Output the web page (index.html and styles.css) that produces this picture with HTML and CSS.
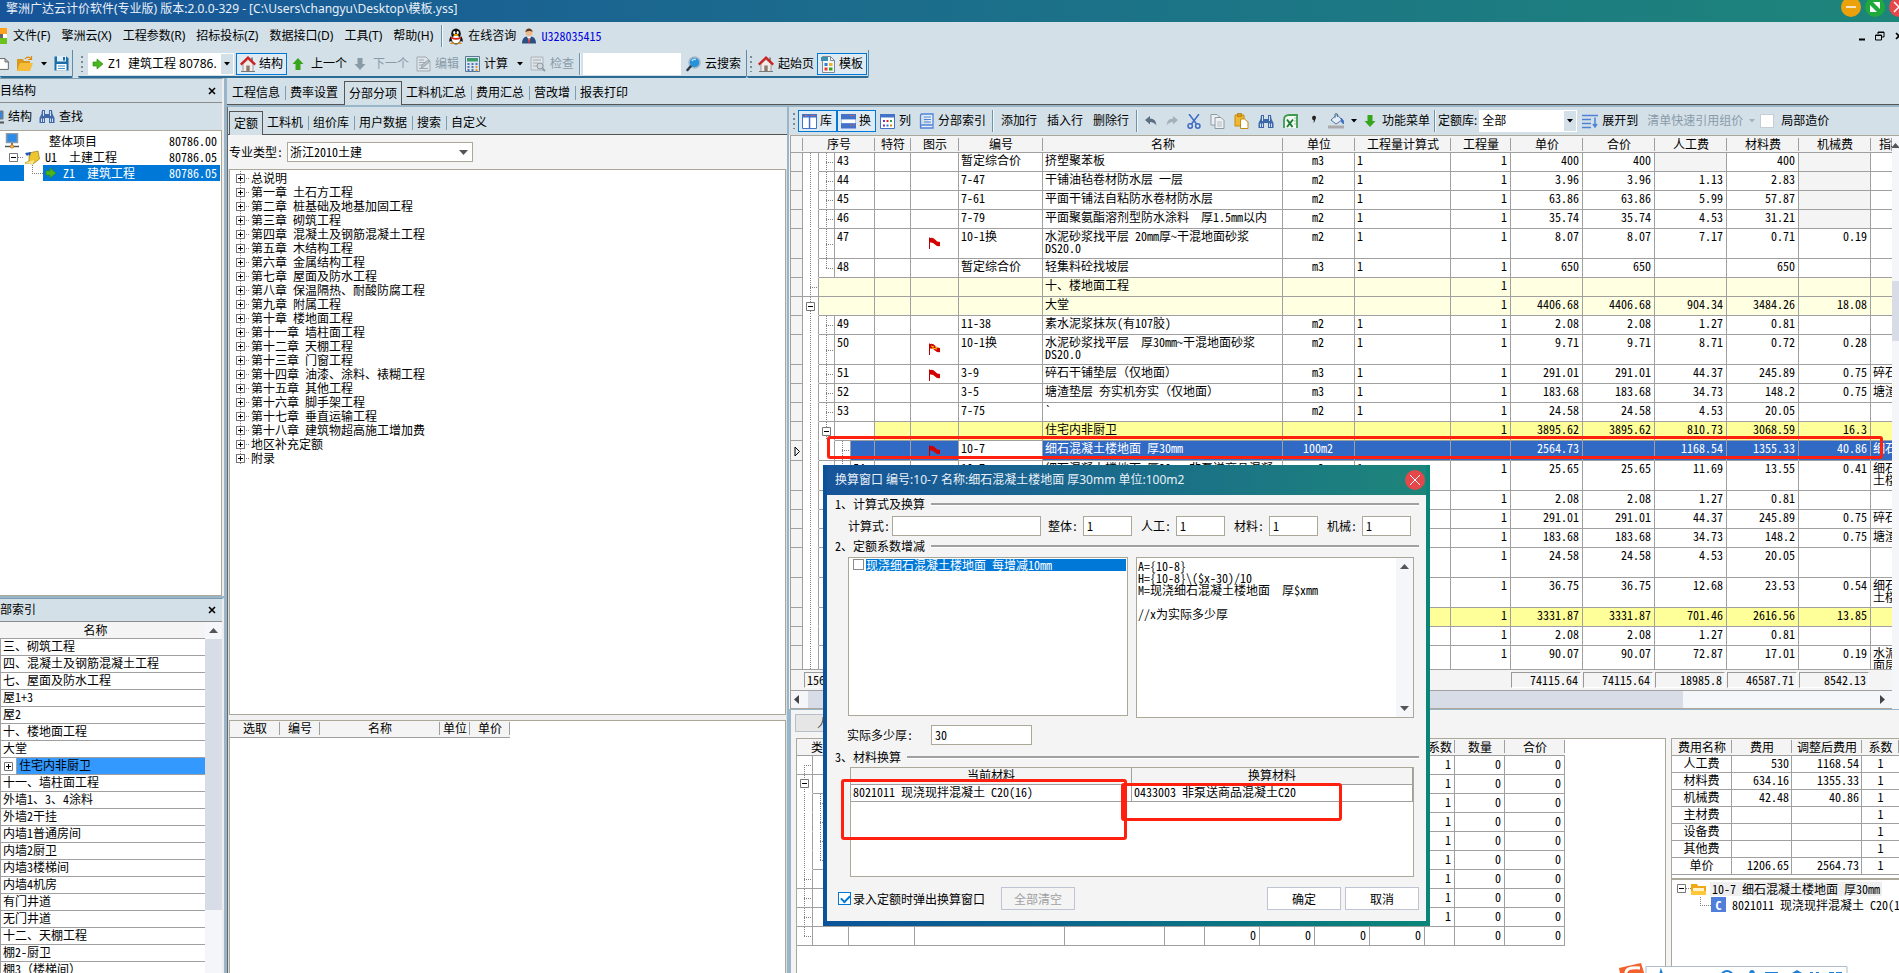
FILE: index.html
```html
<!DOCTYPE html>
<html lang="zh-CN">
<head>
<meta charset="utf-8">
<title>擎洲广达云计价软件</title>
<link rel="stylesheet" href="styles.css">
</head>
<body>
<svg class="defs" aria-hidden="true">
<symbol id="house" viewBox="0 0 16 16"><path d="M3 8v7.5h10V8L8 3.5z" fill="#f3ece6" stroke="#8a8a8a" stroke-width=".8"/><path d="M6.3 9.5h3.4v6H6.3z" fill="#8a7a70"/><path d="M12 1.5v4" stroke="#8a8a8a" stroke-width="2"/><path d="M.8 8.6 8 1.6l7.200 7" fill="none" stroke="#cf2020" stroke-width="2.200"/><path d="M1 15.500h14" stroke="#777"/></symbol>
<symbol id="right" viewBox="0 0 12 12"><path d="M1 4h4V1l6 5-6 5V8H1z" fill="#4cb51e" stroke="#2f8f14" stroke-width=".7"/></symbol>
<symbol id="up" viewBox="0 0 12 14"><path d="M6 1l5.500 6H8.500v6h-5V7H.5z" fill="#35a51b"/></symbol>
<symbol id="down" viewBox="0 0 12 14"><path d="M6 13l5.500-6H8.500V1h-5v6H.5z" fill="currentColor"/></symbol>
<symbol id="caret" viewBox="0 0 8 4"><path d="M1 0h6L4 3.500z" fill="currentColor"/></symbol>
<symbol id="folder" viewBox="0 0 18 16"><path d="M1 3h6l1 2h6v10H1z" fill="#d99a1c"/><path d="M4 7h13l-3 8H1z" fill="#f6bd3a"/><path d="M9 3c2-3 5-2 6 0M15.500 0v3.500H12" fill="none" stroke="#e08a10" stroke-width="1.200"/></symbol>
<symbol id="save" viewBox="0 0 15 15"><path d="M.5.5h12l2 2v12H.5z" fill="#1c6ea8"/><path d="M3 0h9v5.500H3z" fill="#dff0fa"/><path d="M9 1h2v3.500H9z" fill="#1c6ea8"/><path d="M2.500 8h10v6.500h-10z" fill="#fff"/><path d="M4 10h7M4 12.500h7" stroke="#3b93c9"/></symbol>
<symbol id="page" viewBox="0 0 12 16"><path d="M-4 1.500H6l4 4v9H-4zM6 1.500v4h4" fill="#fff" stroke="#666" stroke-width="1.200"/></symbol>
<symbol id="edit" viewBox="0 0 15 16"><path d="M1 1h9l4 4v10H1z" fill="#dde3e6" stroke="#9fabb3"/><path d="M3 4h5M3 6.500h7M3 9h4M3 12.500h9" stroke="#9fabb3"/><path d="M5 12l1-3 6-5 1.500 2-6 5z" fill="#b5bfc6" stroke="#8b98a1" stroke-width=".7"/></symbol>
<symbol id="calc" viewBox="0 0 15 16"><path d="M.5.500h14v15H.5z" fill="#dce5f0" stroke="#5a7796"/><path d="M2 2h11v3.500H2z" fill="#3c9d6a"/><path d="M2.500 8h2M6.500 8h2M10.500 8h2M2.500 11h2M6.500 11h2M2.500 14h2M6.500 14h2" stroke="#4c78b8" stroke-width="1.800"/><path d="M10.500 11h2M10.500 14h2" stroke="#e8a020" stroke-width="1.800"/></symbol>
<symbol id="check" viewBox="0 0 16 16"><path d="M1 1h12v13H1z" fill="#dde3e6" stroke="#aab4bb"/><path d="M3 4h8M3 7h5M3 10h4" stroke="#a4afb6"/><circle cx="10" cy="10" r="3" fill="#d0d8dd" stroke="#8b98a1"/><path d="M12.500 12.500 15 15" stroke="#8b98a1" stroke-width="1.800"/></symbol>
<symbol id="search" viewBox="0 0 15 16"><circle cx="8.500" cy="6.500" r="5.500" fill="#2293dc" stroke="#a9b7c2" stroke-width="1.500"/><path d="M6 5a3 3 0 0 1 4-1.500" stroke="#bfe3fa" stroke-width="1.500" fill="none"/><path d="M4.500 10.500 1.500 14" stroke="#2a3a48" stroke-width="2.500" stroke-linecap="round"/></symbol>
<symbol id="tmpl" viewBox="0 0 15 18"><path d="M1.500 1.500h8l4 4v12h-12z" fill="#f4f7f9" stroke="#7b8a95"/><path d="M9.500 1.500v4h4" fill="none" stroke="#7b8a95"/><path d="M0 2h7v4H0z" fill="#3c90b0"/><path d="M3.500 8h3v3h-3z" fill="#2f7fd0"/><path d="M8 8h3.500v3H8z" fill="#f0b030"/><path d="M3.500 12.500h3v3h-3z" fill="#e33"/><path d="M8 12.500h3.500v3H8z" fill="#35a51b"/></symbol>
<symbol id="qq" viewBox="0 0 16 17"><ellipse cx="8" cy="6" rx="4.800" ry="5.500" fill="#111"/><path d="M3 8c-2 3-2 5-1.500 6l2-1.500zM13 8c2 3 2 5 1.500 6l-2-1.500z" fill="#111"/><ellipse cx="8" cy="11.500" rx="4.500" ry="4.500" fill="#fff" stroke="#111"/><ellipse cx="6.300" cy="4.500" rx="1.100" ry="1.500" fill="#fff"/><ellipse cx="9.700" cy="4.500" rx="1.100" ry="1.500" fill="#fff"/><ellipse cx="8" cy="7" rx="2.600" ry="1" fill="#f5a800"/><path d="M3 8.500q5 3 10 0v2q-5 2.500-10 0z" fill="#d8201a"/><path d="M2.500 15.500q2-2 4.500 0zM9 15.500q2-2 4.500 0z" fill="#f5a800" stroke="#c77b00" stroke-width=".6"/></symbol>
<symbol id="man" viewBox="0 0 16 16"><circle cx="8" cy="4.500" r="3.500" fill="#f0b78a"/><path d="M4.300 4Q5 .5 8 .5T11.700 4Q9 2 4.300 4z" fill="#5b3a20"/><path d="M1 15.500q0-6 4.500-7L8 11l2.500-2.500q4.500 1 4.500 7z" fill="#2b4f80"/><path d="M6.500 9h3L8 15z" fill="#fff"/><path d="M7.500 10h1l.5 4-1 1.500L7 14z" fill="#c33"/></symbol>
<symbol id="bino" viewBox="0 0 16 15"><path d="M3 1h3v4h4V1h3l.5 4L15.500 9v5h-5.500V9H6v5H.5V9L2.500 5z" fill="#3f68a8"/><path d="M2.500 9.500v3.500M4.500 9.500v3.500M11.500 9.500v3.500M13.500 9.500v3.500M4.500 2v5M11.500 2v5" stroke="#e6eefa" stroke-width=".9"/></symbol>
<symbol id="pc" viewBox="0 0 14 16"><path d="M1.500.5h11v9h-11z" fill="#2c8be8" stroke="#8e9aa5" stroke-width="1.500"/><path d="M7 10v3M0 13.500h14" stroke="#555" stroke-width="1.500"/><circle cx="7" cy="13.500" r="1.700" fill="#ffb84a" stroke="#b06c00" stroke-width=".6"/></symbol>
<symbol id="proj" viewBox="0 0 16 15"><path d="M5 3 14 1l1.500 8L9 14 1 13l4-2z" fill="#edc62e" stroke="#9a7a10" stroke-width=".7"/><path d="M1 13q5 1 8 1l1-4z" fill="#fae98c"/><path d="M1 3l2 3 1.500-1.500L6 6l1-4-3 .5z" fill="#1f55b5"/></symbol>
<symbol id="win" viewBox="0 0 15 15"><path d="M.5.5h14v14H.5z" fill="#fff" stroke="#4373c9"/><path d="M0 0h15v3.500H0zM6.800 0h1.500v15H6.800z" fill="#4373c9"/><path d="M3 1.500h2M9 1.500h1.500M11.500 1.500H13" stroke="#ff5a4a"/></symbol>
<symbol id="rows" viewBox="0 0 15 15"><path d="M0 0h15v5H0zM0 9.500h15v5H0z" fill="#4373c9"/><path d="M0 5h15v4.500H0z" fill="#fff" stroke="#4373c9" stroke-width=".8"/><path d="M9 1.500h1.500M12 1.500h1.500M9 11h1.500M12 11h1.500" stroke="#ff5a4a"/></symbol>
<symbol id="cols" viewBox="0 0 15 15"><path d="M.5.500h14v14H.5z" fill="#fff" stroke="#4373c9"/><path d="M0 0h15v3.500H0z" fill="#4373c9"/><path d="M3 7h2M3 11.500h2" stroke="#7a2fc0" stroke-width="2"/><path d="M6.500 7h2" stroke="#d22" stroke-width="2"/><path d="M10 7h2" stroke="#2aa04a" stroke-width="2"/><path d="M6.500 11.500h2" stroke="#1a7ad0" stroke-width="2"/><path d="M10 11.500h2" stroke="#e08a10" stroke-width="2"/></symbol>
<symbol id="book" viewBox="0 0 15 16"><path d="M3 1h11v11H3q-2 1-1.500 3H14v-2M1.500 14V3Q1.500 1 3 1" fill="#e8f0fc" stroke="#4f82d6" stroke-width="1.300"/><path d="M5 4h7M5 6.500h7M5 9h7" stroke="#4f82d6"/></symbol>
<symbol id="undo" viewBox="0 0 12 11"><path d="M0 4 5 0v2.500q6 0 6.500 7Q9 6 5 6v2.500z" fill="currentColor"/></symbol>
<symbol id="redo" viewBox="0 0 12 11"><path d="M12 4 7 0v2.500q-6 0-6.500 7Q3 6 7 6v2.500z" fill="currentColor"/></symbol>
<symbol id="cut" viewBox="0 0 14 15"><path d="M2 0l7.500 10M12 0 4.500 10" stroke="#3f6bc4" stroke-width="1.500"/><circle cx="3.200" cy="12" r="2.200" fill="none" stroke="#3f6bc4" stroke-width="1.500"/><circle cx="10.800" cy="12" r="2.200" fill="none" stroke="#3f6bc4" stroke-width="1.500"/></symbol>
<symbol id="copy" viewBox="0 0 15 15"><path d="M1 .5h6l2.500 2.500v8H1z" fill="#eef1f4" stroke="#8f99a3"/><path d="M5 3.500h6l3 3v8H5z" fill="#eef1f4" stroke="#8f99a3"/><path d="M7 8h5M7 10h5M7 12h5" stroke="#a5afb8" stroke-width=".8"/></symbol>
<symbol id="paste" viewBox="0 0 15 16"><path d="M1 2h9v11H1z" fill="#f1b72f" stroke="#c58c10"/><path d="M3.500.5h4v3h-4z" fill="#d9a020" stroke="#a87408" stroke-width=".7"/><path d="M6.500 6h4l3.500 3v6.500H6.500z" fill="#fff" stroke="#c58c10"/></symbol>
<symbol id="excel" viewBox="0 0 15 15"><path d="M14 14V1H6Q1 1 1 6v8" fill="#f3faf3" stroke="#3f9a50" stroke-width="1.800"/><path d="M4 5.500 9.500 13M10 5.500 4 13" stroke="#1f7a35" stroke-width="2"/><path d="M11 4h2M11 7h2M11 10h2" stroke="#8cc79a"/></symbol>
<symbol id="bucket" viewBox="0 0 17 16"><path d="M3 7 9 1.500 14 7 8 11z" fill="#e4ecf8" stroke="#56749c"/><path d="M7 5V1q1.500-1.500 2.500 0v3" fill="none" stroke="#56749c"/><path d="M13 5q3.500 2 2.500 6-2.500-1-2.500-6z" fill="#3c78d8" stroke="#2b5bb0" stroke-width=".6"/><path d="M0 12.500h16v3H0z" fill="#aaa"/></symbol>
<symbol id="expand" viewBox="0 0 16 15"><path d="M0 1.500h16M0 5.500h9M0 9.500h9M0 13.500h9" stroke="#4f82d6" stroke-width="1.500"/><path d="M13 3.500v9M11 10l2 3 2-3" fill="none" stroke="#4f82d6" stroke-width="1.500"/></symbol>
<symbol id="flag" viewBox="0 0 11 12"><path d="M.5.500V12" stroke="#b00"/><path d="M1 1Q4 0 6 2.500T11 5v4Q8 10 6 7.500T1 5.500z" fill="#d20000"/></symbol>
<symbol id="plus" viewBox="0 0 9 9"><path d="M.5.5h8v8h-8z" fill="#fff" stroke="#777"/><path d="M2 4.500h5M4.500 2v5" stroke="#000"/></symbol>
<symbol id="minus" viewBox="0 0 9 9"><path d="M.5.5h8v8h-8z" fill="#fff" stroke="#777"/><path d="M2 4.500h5" stroke="#000"/></symbol>
<symbol id="x" viewBox="0 0 8 8"><path d="M1 1l6 6M7 1 1 7" stroke="currentColor" stroke-width="1.600"/></symbol>
<symbol id="tu" viewBox="0 0 9 5"><path d="M0 5h9L4.500 0z" fill="#555"/></symbol>
<symbol id="td" viewBox="0 0 9 5"><path d="M0 0h9L4.500 5z" fill="#555"/></symbol>
<symbol id="tl" viewBox="0 0 5 9"><path d="M5 0v9L0 4.500z" fill="#444"/></symbol>
<symbol id="tr" viewBox="0 0 5 9"><path d="M0 0v9l5-4.500z" fill="#444"/></symbol>
</svg>

<header class="titlebar"><span>擎洲广达云计价软件(专业版) 版本:2.0.0-329 - [C:\Users\changyu\Desktop\模板.yss]</span>
<div class="winbtns">
<button class="round orange" aria-label="最小化"><svg width="12" height="12"><path d="M1 6h10" stroke="#fff" stroke-width="1.500"/></svg></button>
<button class="round green" aria-label="还原"><svg width="12" height="12"><path d="M4 1h7v7zM1 4v7h7z" fill="#fff"/></svg></button>
<button class="round red" aria-label="关闭"><svg width="12" height="12"><path d="M1 1l10 10M11 1 1 11" stroke="#fff" stroke-width="1.500"/></svg></button>
</div></header>

<nav class="menu">
<svg class="app" width="7" height="16"><path d="M0 0h7v6H0z" fill="#ffa21f"/><path d="M0 10h7v6H0z" fill="#6cc11c"/><path d="M0 6h3v4H0z" fill="#666"/><path d="M3 6h4v4H3z" fill="#fff"/></svg>
<button>文件(F)</button><button>擎洲云(X)</button><button>工程参数(R)</button><button>招标投标(Z)</button><button>数据接口(D)</button><button>工具(T)</button><button>帮助(H)</button>
<i class="sep"></i>
<button class="ico"><svg width="16" height="17"><use href="#qq"/></svg>在线咨询</button>
<button class="ico user"><svg width="16" height="16"><use href="#man"/></svg><span class="mono">U328035415</span></button>
<div class="mdi"><svg width="6" height="10"><path d="M0 8.500h6" stroke="#000" stroke-width="2"/></svg><svg width="10" height="10"><path d="M3 3V1h6v5H7M.5 4h6v5h-6zM0 4.500h7M3 1.500h6" fill="none" stroke="#000"/></svg><svg width="8" height="8"><use href="#x"/></svg></div>
</nav>

<div class="toolbar">
<div class="band first">
<svg width="10" height="16"><use href="#page"/></svg><svg width="18" height="16"><use href="#folder"/></svg><svg width="8" height="4"><use href="#caret"/></svg><svg width="15" height="15"><use href="#save"/></svg>
</div>
<div class="band grow">
<i class="grip"></i>
<div class="combo node"><svg width="12" height="12"><use href="#right"/></svg><select aria-label="节点"><option>Z1&nbsp; 建筑工程 80786.</option></select><span class="drop"><svg width="8" height="4"><use href="#caret"/></svg></span></div>
<button class="ico on"><svg width="16" height="16"><use href="#house"/></svg>结构</button>
<button class="ico step"><svg width="12" height="14"><use href="#up"/></svg>上一个</button>
<button class="ico step off"><svg width="12" height="14"><use href="#down"/></svg>下一个</button>
<button class="ico off"><svg width="15" height="16"><use href="#edit"/></svg>编辑</button>
<button class="ico"><svg width="15" height="16"><use href="#calc"/></svg>计算<svg class="cr" width="8" height="4"><use href="#caret"/></svg></button>
<button class="ico off"><svg width="16" height="16"><use href="#check"/></svg>检查</button>
<i class="sep"></i>
<input class="search" aria-label="搜索">
<button class="ico"><svg width="15" height="16"><use href="#search"/></svg>云搜索</button>
</div>
<div class="band last">
<i class="grip"></i>
<button class="ico home"><svg width="16" height="16"><use href="#house"/></svg>起始页</button>
<button class="ico on"><svg width="15" height="18"><use href="#tmpl"/></svg>模板</button>
</div>
</div>

<main class="work">
<aside class="left">
<section class="pane">
<div class="phead"><span>目结构</span><button aria-label="关闭"><svg width="8" height="8"><use href="#x"/></svg></button></div>
<div class="ptools"><svg width="4" height="14"><path d="M0 1h3v8H0z" fill="#2c8be8" stroke="#777"/><path d="M0 12.500h4" stroke="#555" stroke-width="2"/></svg><button>结构</button><svg width="16" height="15"><use href="#bino"/></svg><button>查找</button></div>
<div class="ptree mono">
<div class="pr p0"><svg width="14" height="16"><use href="#pc"/></svg><span>整体项目</span><b>80786.00</b></div>
<div class="pr p1"><svg width="9" height="9"><use href="#minus"/></svg><i></i><svg width="16" height="15"><use href="#proj"/></svg><span>U1&nbsp; 土建工程</span><b>80786.05</b></div>
<div class="pr p2"><i></i><svg width="12" height="12"><use href="#right"/></svg><span>Z1&nbsp; 建筑工程</span><b>80786.05</b></div>
</div>
</section>
<section class="pane idx">
<div class="phead"><span>部索引</span><button aria-label="关闭"><svg width="8" height="8"><use href="#x"/></svg></button></div>
<div class="scrollwrap">
<table class="idxt mono"><thead><tr><th>名称<tbody>
<tr><td>三、砌筑工程<tr><td>四、混凝土及钢筋混凝土工程<tr><td>七、屋面及防水工程<tr><td>屋1+3<tr><td>屋2<tr><td>十、楼地面工程<tr><td>大堂
<tr><td class="cur"><svg width="9" height="9"><use href="#plus"/></svg><span>住宅内非厨卫</span>
<tr><td>十一、墙柱面工程<tr><td>外墙1、3、4涂料<tr><td>外墙2干挂<tr><td>内墙1普通房间<tr><td>内墙2厨卫<tr><td>内墙3楼梯间<tr><td>内墙4机房<tr><td>有门井道<tr><td>无门井道<tr><td>十二、天棚工程<tr><td>棚2-厨卫<tr><td>棚3（楼梯间）
</table>
<div class="vbar"><svg width="9" height="5"><use href="#tu"/></svg><i></i></div>
</div>
</section>
</aside>

<div class="right">
<div class="tabs main"><button>工程信息</button><button class="nos">费率设置</button><button class="act">分部分项</button><button>工料机汇总</button><button>费用汇总</button><button>营改增</button><button class="nos">报表打印</button></div>
<div class="cols">
<section class="lib">
<div class="tabs sub"><button class="act">定额</button><button>工料机</button><button>组价库</button><button>用户数据</button><button>搜索</button><button class="nos">自定义</button></div>
<div class="filter mono"><label for="kind">专业类型:</label><div class="kind"><select id="kind"><option>浙江2010土建</option></select><svg width="9" height="5"><use href="#td"/></svg></div></div>
<ul class="chap mono">
<li>总说明<li>第一章 土石方工程<li>第二章 桩基础及地基加固工程<li>第三章 砌筑工程<li>第四章 混凝土及钢筋混凝土工程<li>第五章 木结构工程<li>第六章 金属结构工程<li>第七章 屋面及防水工程<li>第八章 保温隔热、耐酸防腐工程<li>第九章 附属工程<li>第十章 楼地面工程<li>第十一章 墙柱面工程<li>第十二章 天棚工程<li>第十三章 门窗工程<li>第十四章 油漆、涂料、裱糊工程<li>第十五章 其他工程<li>第十六章 脚手架工程<li>第十七章 垂直运输工程<li>第十八章 建筑物超高施工增加费<li>地区补充定额<li>附录
</ul>
<div class="pick mono"><table><colgroup><col class="c50"><col class="c40"><col class="c120"><col class="c30"><col class="c40"></colgroup><tr><th>选取<th>编号<th>名称<th>单位<th>单价</table></div>
</section>

<section class="detail">
<div class="gtools">
<i class="grip"></i>
<button class="ico on"><svg width="15" height="15"><use href="#win"/></svg>库</button><button class="ico on"><svg width="15" height="15"><use href="#rows"/></svg>换</button><button class="ico pad"><svg width="15" height="15"><use href="#cols"/></svg>列</button><button class="ico pad"><svg width="15" height="16"><use href="#book"/></svg>分部索引</button>
<i class="sep"></i><button>添加行</button><button>插入行</button><button>删除行</button><i class="sep"></i>
<div class="icons"><svg class="dk" width="12" height="11"><use href="#undo"/></svg><svg class="lt" width="12" height="11"><use href="#redo"/></svg><svg width="14" height="15"><use href="#cut"/></svg><svg width="15" height="15"><use href="#copy"/></svg><svg width="15" height="16"><use href="#paste"/></svg><svg width="16" height="15"><use href="#bino"/></svg><svg width="15" height="15"><use href="#excel"/></svg><svg width="12" height="12"><path d="M5 2.500a2 2 0 1 1 3.500 1.500Q8 7 6 8q1.200-1.800 1-2.500Q5.200 5.300 5 2.500z" fill="#222"/></svg><svg width="17" height="16"><use href="#bucket"/></svg></div>
<svg width="8" height="4"><use href="#caret"/></svg>
<button class="ico menu2"><svg class="gr" width="12" height="14"><use href="#down"/></svg>功能菜单</button><i class="sep"></i>
<label for="lib">定额库:</label><div class="combo"><select id="lib"><option>全部</option></select><span class="drop"><svg width="8" height="4"><use href="#caret"/></svg></span></div>
<button class="ico exp"><svg width="16" height="15"><use href="#expand"/></svg>展开到</button><button class="off">清单快速引用组价</button><svg class="lt" width="8" height="4"><use href="#caret"/></svg><input type="checkbox" id="part"><label class="pl" for="part">局部造价</label>
</div>
<div class="gridarea">
<div class="gridmain">
<div class="gridclip">
<table class="grid mono"><colgroup><col class="c12"><col class="c16"><col class="c16"><col class="c16"><col class="c24"><col class="c36"><col class="c48"><col class="c84"><col class="c240"><col class="c72"><col class="c96"><col class="c60"><col class="c72"><col class="c72"><col class="c72"><col class="c72"><col class="c72"><col></colgroup>
<thead><tr><th><th colspan="4">序号<th>特符<th>图示<th>编号<th>名称<th>单位<th>工程量计算式<th>工程量<th>单价<th>合价<th>人工费<th>材料费<th>机械费<th class="clip">指标
<tbody>
<tr><td><td class="v"><td class="br"><td colspan="2">43<td><td><td>暂定综合价<td>挤塑聚苯板<td>m3<td>1<td>1<td>400<td>400<td class="g"><td>400<td class="g"><td>
<tr><td><td class="v"><td class="br"><td colspan="2">44<td><td><td>7-47<td>干铺油毡卷材防水层 一层<td>m2<td>1<td>1<td>3.96<td>3.96<td>1.13<td>2.83<td class="g"><td>
<tr><td><td class="v"><td class="br"><td colspan="2">45<td><td><td>7-61<td>平面干铺法自粘防水卷材防水层<td>m2<td>1<td>1<td>63.86<td>63.86<td>5.99<td>57.87<td class="g"><td>
<tr><td><td class="v"><td class="br"><td colspan="2">46<td><td><td>7-79<td>平面聚氨酯溶剂型防水涂料&nbsp; 厚1.5mm以内<td>m2<td>1<td>1<td>35.74<td>35.74<td>4.53<td>31.21<td class="g"><td>
<tr class="two"><td><td class="v"><td class="br"><td colspan="2">47<td><td><svg width="11" height="12"><use href="#flag"/></svg><td>10-1换<td>水泥砂浆找平层 20mm厚~干混地面砂浆<br>DS20.0<td>m2<td>1<td>1<td>8.07<td>8.07<td>7.17<td>0.71<td>0.19<td>
<tr><td><td class="v"><td class="br end"><td colspan="2">48<td><td><td>暂定综合价<td>轻集料砼找坡层<td>m3<td>1<td>1<td>650<td>650<td><td>650<td><td>
<tr class="y1"><td><td class="br"><td colspan="3"><td><td><td><td>十、楼地面工程<td><td><td>1<td><td><td><td><td><td>
<tr class="y1"><td><td class="v nd"><svg width="9" height="9"><use href="#minus"/></svg><td colspan="3"><td><td><td><td>大堂<td><td><td>1<td>4406.68<td>4406.68<td>904.34<td>3484.26<td>18.08<td>
<tr><td><td class="v"><td class="br"><td colspan="2">49<td><td><td>11-38<td>素水泥浆抹灰(有107胶)<td>m2<td>1<td>1<td>2.08<td>2.08<td>1.27<td>0.81<td><td>
<tr class="two"><td><td class="v"><td class="br"><td colspan="2">50<td><td><svg width="11" height="12"><use href="#flag"/><path d="M2 3l3 1M6 3.500 8 5M3 5l5 1" stroke="#ffd400"/></svg><td>10-1换<td>水泥砂浆找平层&nbsp; 厚30mm~干混地面砂浆<br>DS20.0<td>m2<td>1<td>1<td>9.71<td>9.71<td>8.71<td>0.72<td>0.28<td>
<tr><td><td class="v"><td class="br"><td colspan="2">51<td><td><svg width="11" height="12"><use href="#flag"/></svg><td>3-9<td>碎石干铺垫层（仅地面）<td>m3<td>1<td>1<td>291.01<td>291.01<td>44.37<td>245.89<td>0.75<td>碎石
<tr><td><td class="v"><td class="br"><td colspan="2">52<td><td><td>3-5<td>塘渣垫层 夯实机夯实（仅地面）<td>m3<td>1<td>1<td>183.68<td>183.68<td>34.73<td>148.2<td>0.75<td>塘渣
<tr><td><td class="v"><td class="br"><td colspan="2">53<td><td><td>7-75<td>`<td>m2<td>1<td>1<td>24.58<td>24.58<td>4.53<td>20.05<td><td>
<tr class="y2"><td><td class="v"><td class="v nd"><svg width="9" height="9"><use href="#minus"/></svg><td colspan="2" class="w"><td><td><td><td>住宅内非厨卫<td><td><td>1<td>3895.62<td>3895.62<td>810.73<td>3068.59<td>16.3<td>
<tr class="cur"><td><svg width="6" height="11"><path d="M1 1v9l4.500-4.500z" fill="none" stroke="#000"/></svg><td class="v"><td class="e"><td class="br"><td><td><td><svg width="11" height="12"><use href="#flag"/></svg><td class="w">10-7<td>细石混凝土楼地面 厚30mm<td>100m2<td><td><td>2564.73<td><td>1168.54<td>1355.33<td>40.86<td>细石
<tr class="two"><td><td class="v"><td class="e"><td class="br"><td>54<td><td><td>10-7<td>细石混凝土楼地面~厚30mm~非泵送商品混凝<td>m2<td>1<td>1<td>25.65<td>25.65<td>11.69<td>13.55<td>0.41<td>细石<br>土楼
<tr><td><td class="v"><td class="e"><td class="br"><td><td><td><td><td><td><td><td>1<td>2.08<td>2.08<td>1.27<td>0.81<td><td>
<tr><td><td class="v"><td class="e"><td class="br"><td><td><td><td><td><td><td><td>1<td>291.01<td>291.01<td>44.37<td>245.89<td>0.75<td>碎石
<tr><td><td class="v"><td class="e"><td class="br"><td><td><td><td><td><td><td><td>1<td>183.68<td>183.68<td>34.73<td>148.2<td>0.75<td>塘渣
<tr class="two"><td><td class="v"><td class="e"><td class="br"><td><td><td><td><td><td><td><td>1<td>24.58<td>24.58<td>4.53<td>20.05<td><td>
<tr class="two"><td><td class="v"><td class="e"><td class="br"><td><td><td><td><td><td><td><td>1<td>36.75<td>36.75<td>12.68<td>23.53<td>0.54<td>细石<br>土楼
<tr class="y2"><td><td class="v"><td class="v"><td colspan="2" class="w"><td><td><td><td><td><td><td>1<td>3331.87<td>3331.87<td>701.46<td>2616.56<td>13.85<td>
<tr><td><td class="v"><td class="e"><td class="br"><td><td><td><td><td><td><td><td>1<td>2.08<td>2.08<td>1.27<td>0.81<td><td>
<tr class="two"><td><td class="v"><td class="e"><td class="br"><td><td><td><td><td><td><td><td>1<td>90.07<td>90.07<td>72.87<td>17.01<td>0.19<td>水泥<br>面层
</table>
</div>
<div class="sums mono"><span class="cnt">156</span><span>74115.64</span><span>74115.64</span><span>18985.8</span><span>46587.71</span><span>8542.13</span></div>
<div class="hbar"><svg width="5" height="9"><use href="#tl"/></svg><i></i><svg width="5" height="9"><use href="#tr"/></svg></div>
</div>
<div class="vbar slim"><svg width="9" height="5"><use href="#tu"/></svg><i></i></div>
</div>
<div class="lower">
<div class="ltabs mono"><button>人材机</button></div>
<div class="lcols mono">
<div class="box res">
<table class="rt"><colgroup><col class="c16"><col class="c36"><col class="c66"><col class="c150"><col class="c100"><col class="c40"><col class="c55"><col class="c55"><col class="c55"><col class="c55"><col class="c30"><col class="c50"><col class="c60"></colgroup>
<thead><tr><th colspan="2">类别<th><th><th><th><th><th><th><th><th>系数<th>数量<th>合价
<tbody>
<tr><td class="br top"><td><td><td><td><td><td><td><td><td><td>1<td>0<td>0
<tr><td class="v nd"><svg width="9" height="9"><use href="#minus"/></svg><td><td><td><td><td><td><td><td><td><td>1<td>0<td>0
<tr><td class="v"><td class="br e"><td><td><td><td><td><td><td><td><td>1<td>0<td>0
<tr><td class="v"><td class="br e"><td><td><td><td><td><td><td><td><td>1<td>0<td>0
<tr><td class="v"><td class="br e"><td><td><td><td><td><td><td><td><td>1<td>0<td>0
<tr><td class="v"><td class="br end"><td><td><td><td><td><td><td><td><td>1<td>0<td>0
<tr><td class="br"><td><td><td><td><td><td><td><td><td><td>1<td>0<td>0
<tr><td class="br"><td><td><td><td><td><td><td><td><td><td>1<td>0<td>0
<tr><td class="br"><td><td><td><td><td><td><td><td><td><td>1<td>0<td>0
<tr><td class="br end"><td><td><td><td><td><td>0<td>0<td>0<td>0<td><td>0<td>0
</table></div>
<div class="box fee">
<table class="ft"><colgroup><col class="c60"><col class="c60"><col class="c70"><col></colgroup>
<thead><tr><th>费用名称<th>费用<th>调整后费用<th>系数
<tbody><tr><td>人工费<td>530<td>1168.54<td>1<tr><td>材料费<td>634.16<td>1355.33<td>1<tr><td>机械费<td>42.48<td>40.86<td>1<tr><td>主材费<td><td><td>1<tr><td>设备费<td><td><td>1<tr><td>其他费<td><td><td>1<tr><td>单价<td>1206.65<td>2564.73<td>1
</table>
<div class="ftree">
<div><svg width="9" height="9"><use href="#minus"/></svg><i></i><svg width="15" height="12"><path d="M0 1h6l1 2h8v9H0z" fill="#f0a818"/><path d="M2 5h11v3H2z" fill="#fff3c8"/><path d="M0 8h15v4H0z" fill="#ffc83a"/></svg><span class="hl">10-7 细石混凝土楼地面 厚30mm</span></div>
<div class="n2"><i></i><b>C</b><span>8021011 现浇现拌混凝土 C20(16)</span></div>
</div>
</div>
</div>
</div>
</section>
</div>
</div>
</main>

<div class="mark mrow"></div>

<div class="dialog" role="dialog" aria-labelledby="dt">
<div class="dhead"><span id="dt">换算窗口 编号:10-7 名称:细石混凝土楼地面 厚30mm 单位:100m2</span><button class="round red" aria-label="关闭"><svg width="12" height="12"><path d="M1 1l10 10M11 1 1 11" stroke="#fff"/></svg></button></div>
<div class="dbody mono">
<h2>1、计算式及换算</h2>
<div class="frow"><label for="f0">计算式:</label><input id="f0" class="wide"><label for="f1">整体:</label><input id="f1" value="1"><label for="f2">人工:</label><input id="f2" value="1"><label for="f3">材料:</label><input id="f3" value="1"><label for="f4">机械:</label><input id="f4" value="1"></div>
<h2>2、定额系数增减</h2>
<div class="two-box">
<div class="list"><div class="item"><input type="checkbox" id="it"><label for="it">现浇细石混凝土楼地面 每增减10mm</label></div></div>
<div class="memo"><textarea aria-label="公式">A={10-8}
H={10-8}\($x-30)/10
M=现浇细石混凝土楼地面  厚$xmm

//x为实际多少厚</textarea><div class="mbar"><svg width="9" height="5"><use href="#tu"/></svg><svg width="9" height="5"><use href="#td"/></svg></div></div>
</div>
<div class="frow act"><label for="th">实际多少厚:</label><input id="th" value="30"></div>
<h2>3、材料换算</h2>
<div class="mat"><table><thead><tr><th>当前材料<th>换算材料<tbody><tr><td>8021011 现浇现拌混凝土 C20(16)<td>0433003 非泵送商品混凝土C20</table></div>
<div class="dfoot"><input type="checkbox" id="pop" checked><label for="pop">录入定额时弹出换算窗口</label><button disabled>全部清空</button><span></span><button>确定</button><button>取消</button></div>
</div>
<div class="mark m1"></div><div class="mark m2"></div>
</div>

<div class="ime"><svg width="230" height="10"><path d="M27 3.500h201V16H27z" fill="#fff" stroke="#b0bccb"/><path d="M0 5 22 0l5 16H2z" fill="#f4602c"/><path d="M21 5Q8 4 7 9t14 7" fill="none" stroke="#fff" stroke-width="3"/><path d="M40 16l2-8 3 8M66 16v-6" fill="none" stroke="#1e7fd6" stroke-width="2"/><circle cx="108" cy="14" r="6" fill="none" stroke="#1e7fd6" stroke-width="2"/><path d="M130 12q0-5 3-5t3 5v4h-6zM146 9h13v2h-13zM173 10l5-3 5 3v6h-10zM191 9h3v2h-3zM197 9h3v2h-3zM210 9h5v7h-5zM217 9h6v7h-6z" fill="#1e7fd6"/></svg></div>
</body>
</html>
```

FILE: styles.css
```css
:root{
--ui:"Noto Sans","Noto Sans CJK SC",sans-serif;
--mono:"Noto Sans Mono CJK SC","Liberation Sans","Noto Sans CJK SC",sans-serif;
--bg:#d3e0e8;--panel:#f4f4f4;--line:#a0a0a0;--edge:#aca899;--rim:#9bb5c8;--blue:#0078d7;
--dv:repeating-linear-gradient(to bottom,#808080 0 1px,transparent 1px 2px);
--dh:repeating-linear-gradient(to right,#808080 0 1px,transparent 1px 2px);
}
*{box-sizing:border-box}
html,body{height:100%;overflow:hidden}
body{margin:0;display:flex;flex-direction:column;position:relative;background:var(--bg);font:12px/16px var(--ui);color:#000}
button,input,select,textarea{font:inherit;color:inherit;margin:0;border-radius:0}
button{background:none;border:0;padding:0;white-space:nowrap}
select{appearance:none;border:0;background:none;padding:0;min-width:0}
svg{display:block;flex:none}
.defs{position:absolute;width:0;height:0}
.mono{font-family:var(--mono)}
table{border-collapse:separate;border-spacing:0;table-layout:fixed}
th{font-weight:normal}

.titlebar{flex:none;height:22px;display:flex;justify-content:space-between;padding-left:6px;color:#e8f0f8;line-height:18px;background:linear-gradient(90deg,#17549a,#1b6a8e 40%,#1d857a)}
.winbtns{display:flex;gap:4px;margin-right:-10px;margin-top:-3px}
.round{width:20px;height:20px;border-radius:50%;display:grid;place-items:center}
.orange{background:#eaa10c}.green{background:#1fa93c}.red{background:#e5484a}

.menu{flex:none;height:28px;display:flex;align-items:center;gap:1px}
.menu button{padding:0 5px}
.menu .ico{padding:0 2px}
.sep{flex:none;width:2px;height:22px;border-left:1px solid #6c93ad;border-right:1px solid #f2f7fa;margin:0 2px}
.ico{display:flex;align-items:center;gap:4px}
.user{color:#0000e0}
.mdi{margin-left:auto;display:flex;align-items:center;gap:10px;margin-right:-4px}

.toolbar{flex:none;height:28px;display:flex}
.band{display:flex;align-items:center;height:28px;border-right:1px solid #5d8cab;border-bottom:2px solid #2b6a94;border-radius:0 0 2px 2px;padding:1px 2px 0 3px}
.first{padding:1px 5px 0 0;width:73px;gap:6px}
.grow{margin-left:5px}
.last{padding-right:1px}
.grip{flex:none;width:2px;height:16px;background:repeating-linear-gradient(to bottom,#7d8a94 0 2px,transparent 2px 5px);margin:0 3px 0 0}
.toolbar .ico{height:22px;padding:0 3px}
.toolbar .on{gap:3px}
.on{border:1px solid var(--blue);background:#dfeaf3}
.toolbar .step{width:62px;gap:7px}
.off{color:#8a9ba8}
.cr{margin:0 0 0 4px}
.combo{display:flex;align-items:center;height:22px;background:#fff;border:1px solid #fff}
.node{width:146px;padding-left:3px;gap:4px;margin:0 2px}
.node+.on{margin-right:2px}
.combo select{flex:1}
.drop{flex:none;width:12px;height:20px;background:var(--bg);display:grid;place-items:center}
.search{width:98px;height:22px;border:0;background:#fff;margin-right:2px}

.work{flex:1;min-height:0;display:grid;grid-template-columns:227px minmax(0,1fr);grid-template-rows:minmax(0,1fr)}
.left{display:grid;grid-template-rows:minmax(0,518fr) minmax(0,375fr);gap:2px;border-right:3px solid var(--rim);background:var(--rim);min-height:0}
.pane{background:var(--bg);border-right:2px solid #eee;border-top:1px solid #7d9db2;display:flex;flex-direction:column;min-height:0;overflow:hidden}
.phead{flex:none;height:24px;display:flex;justify-content:space-between;align-items:center;border-bottom:1px solid #8c8c8c;padding-right:6px}
.idx .phead{height:23px}
.ptools{flex:none;height:27px;display:flex;align-items:center;gap:4px}
.ptools button{margin-right:3px}
.ptree{flex:1;background:#fff;border:1px solid var(--edge);border-left:0;padding:2px 1px 0 0}
.pr{display:flex;align-items:center;height:16px;line-height:14px;white-space:nowrap}
.pr b{font-weight:normal;margin-left:auto;padding-right:3px}
.pr i{flex:none}
.p0{padding-left:5px}.p0 span{margin-left:30px}
.p1{padding-left:9px}.p1 i{width:6px;height:1px;background:var(--dh)}.p1 span{margin-left:5px}
.p2{color:#fff;background:linear-gradient(90deg,var(--blue) 24px,#fff 24px 43px,var(--blue) 43px)}
.p2 i{width:12px;height:16px;margin-left:32px;background:var(--dv) 0 0/1px 9px no-repeat,var(--dh) 0 8px/11px 1px no-repeat}
.p2 svg{margin:0 6px 0 1px}
.scrollwrap{flex:1;min-height:0;display:flex;background:#fff;overflow:hidden}
.idxt{flex:1;height:max-content;line-height:14px}
.idxt th{height:17px;background:var(--panel);border-bottom:1px solid var(--line);padding:0 14px 0 0}
.idxt td{height:17px;line-height:12px;padding:0 0 2px 2px;border-bottom:1px solid var(--line);border-left:1px solid var(--line);white-space:nowrap}
.idxt .cur{padding:0 0 2px 3px}
.cur svg{display:inline-block;vertical-align:middle}
.idxt .cur{background:linear-gradient(90deg,#fff 15px,var(--line) 15px 16px,#39f 16px)}
.idxt .cur span{margin-left:6px}
.vbar{width:17px;background:#f5f6fa;display:flex;flex-direction:column;align-items:center}
.vbar svg{margin:6px 0}
.vbar i{width:17px;height:271px;background:#d8dce6}

.right{min-width:0;min-height:0;display:flex;flex-direction:column}
.tabs{display:flex;align-items:flex-end;flex:none;border-bottom:1px solid #555}
.tabs button{height:22px;padding:0 5px 0 4px;border-right:1px solid;border-image:linear-gradient(transparent 20%,#7c9db2 20% 80%,transparent 80%) 1}
.tabs .nos{border-image:none;border-right-color:transparent}
.tabs .act{height:24px;margin-bottom:-1px;padding:0 4px;border:1px solid #555;border-bottom:0;border-image:none;background:var(--bg)}
.main{height:27px;padding-left:1px}
.sub{height:28px;padding-left:1px}
.cols{flex:1;min-height:0;display:grid;grid-template-columns:562px minmax(0,1fr);grid-template-rows:minmax(0,1fr);border-top:2px solid var(--rim)}
.lib{display:flex;flex-direction:column;min-height:0;border-left:1px solid #666;border-right:2px solid var(--rim);background:var(--bg)}
.filter{flex:none;height:34px;display:flex;align-items:center;gap:4px;background:var(--panel);padding-left:1px}
.kind{display:flex;align-items:center;width:186px;height:20px;background:#fff;border:1px solid var(--edge);padding:0 4px 0 2px}
.kind select{flex:1}
.chap{flex:545 1 0;min-height:0;overflow:hidden;margin:0 1px 0 1px;list-style:none;background:#fff;border:1px solid var(--edge);padding:1px 0 0 5px}
.chap li{height:14px;line-height:14px;padding-left:16px;background:
linear-gradient(#000,#000) 3px 7px/5px 1px no-repeat,
linear-gradient(#000,#000) 5px 5px/1px 5px no-repeat,
linear-gradient(#fff,#fff) 2px 4px/7px 7px no-repeat,
linear-gradient(#777,#777) 1px 3px/9px 9px no-repeat,
var(--dh) 11px 7px/4px 1px no-repeat,
var(--dv) 5px 0/1px 100% no-repeat}
.pick{flex:253 1 0;background:#fff;margin:5px 1px 0 1px;border:1px solid var(--edge);border-bottom:0;box-shadow:0 -5px 0 #f0f0f0}
.pick table{width:280px}
.pick th{height:17px;line-height:14px;padding:0 0 1px;background:linear-gradient(var(--line),var(--line)) right/1px 13px no-repeat var(--panel);border-bottom:1px solid var(--line)}

.detail{display:flex;flex-direction:column;min-height:0;min-width:0;background:var(--panel)}
.gtools{flex:none;height:28px;display:flex;align-items:center;background:var(--bg);padding:0 0 0 4px;white-space:nowrap}
.gtools .ico{height:22px}
.gtools .on{width:39px;padding:0 3px;gap:3px}
.gtools .pad{padding:0 4px}
.gtools>button:not(.ico){padding:0 5px}
.icons{display:flex;align-items:center;gap:9px;margin:0 5px}
.dk{color:#5c6f80}.lt{color:#a3b1bb}.gr{color:#35a51b}
.menu2{margin:0 2px 0 6px;gap:6px}
.gtools .combo{width:98px;margin:0 5px 0 2px;padding-left:2px}
.gtools .exp{margin-right:4px}
.gtools input{appearance:none;width:14px;height:14px;background:#fff;border:1px solid #c8ccd4;margin:0 7px 0 4px}
.gridarea{flex:577 1 0;min-height:0;display:flex;border-top:1px solid var(--edge);border-left:1px solid var(--line);margin-left:1px;background:#fff}
.gridmain{flex:1;min-width:0;display:flex;flex-direction:column}
.gridclip{flex:1;min-height:0;overflow:hidden;border-bottom:1px solid var(--line)}
.grid{width:100%;line-height:12px}
.c12{width:12px}.c16{width:16px}.c24{width:24px}.c30{width:30px}.c36{width:36px}.c40{width:40px}.c48{width:48px}.c50{width:50px}.c55{width:55px}.c60{width:60px}.c66{width:66px}.c70{width:70px}.c72{width:72px}.c84{width:84px}.c96{width:96px}.c100{width:100px}.c120{width:120px}.c150{width:150px}.c240{width:240px}
.grid th,.rt th,.ft th{height:17px;line-height:14px;padding:0 0 1px;background:linear-gradient(var(--line),var(--line)) right/1px 13px no-repeat var(--panel);border-bottom:1px solid var(--line);white-space:nowrap}
.grid .clip{padding-left:8px;text-align:left;overflow:hidden}
.grid td{height:19px;padding:1px 3px 0 2px;vertical-align:top;border-right:1px solid var(--line);border-bottom:1px solid var(--line);white-space:nowrap}
.grid .two td{height:30px}
.grid td:nth-last-child(n+2):nth-last-child(-n+7){text-align:right}
.grid td:nth-last-child(9),.grid td:nth-last-child(12){text-align:center}
.grid td:last-child{border-right:0;padding-right:0;overflow:hidden}
.grid td:nth-last-child(12) svg{display:block;margin:3px auto 0}
.grid .two td:nth-last-child(12) svg{margin-top:7px}
.grid tr>td:first-child{background:var(--panel);padding:3px}
.grid .g{background:var(--panel)}
.y1 td{background-color:#ffffe1}.y2 td{background-color:#ff9}
.grid tbody .cur td{background-color:#316ac5;color:#fff}
.grid tbody .cur td:first-child{background:var(--panel)}
.grid tbody .cur .w{background:#fff;color:#000}
.grid tbody .w,.grid tbody .v,.grid tbody .br,.grid tbody .e,.grid tbody .cur .br,.grid tbody .cur .e{background-color:#fff}
.v,.grid tbody tr>.v{background:var(--dv) 7px 0/1px 100% no-repeat}
.br{background:var(--dv) 7px 0/1px 100% no-repeat,var(--dh) 7px 9px/8px 1px no-repeat}
.two .br{background:var(--dv) 7px 0/1px 100% no-repeat,var(--dh) 7px 15px/8px 1px no-repeat}
.br.end{background:var(--dv) 7px 0/1px 10px no-repeat,var(--dh) 7px 9px/8px 1px no-repeat}
.br.top{background:var(--dv) 7px 9px/1px 10px no-repeat,var(--dh) 7px 9px/8px 1px no-repeat}
.grid td.v{border-bottom-color:transparent}
.grid td.nd{padding:5px 0 0 3px}
.rt td.nd{padding:0 0 0 3px}
.sums{flex:none;height:20px;display:flex;justify-content:flex-end;gap:2px;padding:2px 23px 0 13px;background:var(--panel);line-height:14px}
.sums span{width:70px;height:16px;border:1px solid;border-color:#999 #fff #fff #999;text-align:right;padding-right:2px}
.sums .cnt{width:60px;margin-right:auto;text-align:left;padding-left:2px}
.hbar{flex:none;height:19px;border-top:1px solid var(--line);background:#f5f6fa;display:grid;grid-template-columns:16px 872fr 196fr 12px;align-items:center;border-bottom:1px solid var(--edge);padding-left:1px}
.hbar i{height:17px;background:#d8dce6}
.hbar svg:last-child{grid-column:4}
.hbar svg:first-child{margin-left:2px}
.slim{flex:none;width:7px;overflow:hidden;padding-top:1px}
.slim i{height:60px;margin-top:127px}
.lower{flex:261 1 0;min-height:0;display:flex;flex-direction:column;border-left:2px solid var(--rim);border-top:1px solid var(--rim);padding:4px 0 0 4px}
.ltabs{flex:none;height:24px}
.ltabs button{width:80px;height:18px;border:1px solid #b8bfcc;background:#e6e6e6;color:#555}
.lcols{flex:1;min-height:0;display:flex;gap:5px;line-height:14px}
.box{background:#fff;border:1px solid var(--edge);border-bottom:0;overflow:hidden}
.res{flex:1;margin-left:1px}
.fee{flex:none;width:228px;border-right:0}
.rt{width:768px}
.rt th,.ft th{padding:0}
.rt td{height:19px;padding:0 3px 1px 0;text-align:right;border-right:1px solid var(--line);border-bottom:1px solid var(--line)}
.rt td.v{border-bottom-color:transparent}
.rt td.e{border-bottom-color:transparent}
.ft{width:100%}
.ft td{height:17px;padding:0 2px 1px;text-align:right;border-right:1px solid var(--line);border-bottom:1px solid var(--line)}
.ft td:first-child{text-align:center}
.ft td:last-child{text-align:center;border-right:0}
.ftree{border-top:2px solid var(--edge);margin-top:3px;padding:1px 0 0 5px;white-space:nowrap}
.ftree div{display:flex;align-items:center;height:16px}
.ftree i{flex:none;width:5px;height:1px;background:var(--dh)}
.ftree span{flex:none;padding:0 2px;margin-left:4px}
.hl{background:#efefef}
.ftree .n2{padding-left:23px}
.ftree .n2 i{width:11px;height:16px;background:var(--dv) 0 0/1px 8px no-repeat,var(--dh) 0 8px/11px 1px no-repeat}
.ftree b{flex:none;width:15px;height:15px;background:#4f7fdb;color:#fff;text-align:center;line-height:15px}

.dialog{position:absolute;left:823px;top:465px;width:607px;height:461px;background:linear-gradient(90deg,#0b5399,#0a8578);padding:0 4px 5px;display:flex;flex-direction:column}
.dhead{flex:none;height:30px;display:flex;align-items:center;justify-content:space-between;color:#e8f0f8;padding:0 1px 0 8px;background:linear-gradient(90deg,#17549a,#1d857a)}
.dbody{flex:1;background:var(--panel);padding:1px 7px 0 8px;display:flex;flex-direction:column;line-height:14px}
h2{font:inherit;margin:0;height:16px;display:flex;align-items:center;gap:6px}
h2::after{content:"";flex:1;height:2px;background:var(--line);border-bottom:1px solid #fff}
.frow{display:flex;align-items:center;height:20px;margin:4px 0 2px 13px}
.frow input{width:49px;height:20px;border:1px solid var(--edge);background:#fff;padding:0 3px 2px;margin:0 9px 0 auto}
.frow input:last-child{margin-right:8px}
.frow .wide{width:149px;margin:0 7px 0 2px}
.two-box{display:flex;gap:8px;height:161px;margin:3px 5px 0 13px}
.list{width:280px;height:159px;background:#fff;border:1px solid var(--edge);padding:1px}
.item{display:flex;height:12px;line-height:12px;gap:2px;padding-left:2px}
.item label{flex:1;background:var(--blue);color:#fff}
.item input{appearance:none;width:11px;height:11px;margin-left:1px;border:1px solid #8a8a8a;background:#fff}
.memo{flex:1;display:flex;background:#fff;border:1px solid var(--edge)}
.memo textarea{flex:1;min-width:0;border:0;resize:none;background:none;padding:2px 1px;line-height:12px;overflow:hidden;outline:0}
.mbar{width:17px;display:flex;flex-direction:column;justify-content:space-between;align-items:center;background:#f5f6fa;padding:6px 0}
.act.frow{margin:7px 0 4px 12px}
.act.frow input{width:101px;margin:0 auto 0 18px}
.mat{height:110px;margin:2px 5px 0 15px;border:1px solid var(--edge);background:#fff}
.mat table{width:100%}
.mat th,.mat td{height:17px;line-height:12px;padding:0 2px 3px;border-bottom:1px solid var(--line);border-right:1px solid var(--line)}
.mat th{background:var(--panel)}
.dfoot{display:flex;align-items:center;margin-top:10px;padding-left:3px}
.dfoot input{appearance:none;width:13px;height:13px;border:1px solid var(--blue);margin-right:2px;background:#fff;display:grid}
.dfoot input::before{content:"";width:7px;height:4px;margin:2px 0 0 2px;border-left:2px solid var(--blue);border-bottom:2px solid var(--blue);transform:rotate(-45deg)}
.dfoot button{width:74px;height:23px;border:1px solid #bfc4d2;background:#fff}
.dfoot button:disabled{background:var(--panel);color:#a0a0a0;margin-left:16px}
.dfoot span{flex:1}
.dfoot button:last-child{margin-left:4px}
.mark{position:absolute;border:3px solid #ff2010;border-radius:3px;pointer-events:none}
.mrow{left:827px;top:436px;right:16px;height:23px}
.m1{left:18px;top:314px;width:286px;height:61px}
.m2{left:298px;top:318px;width:221px;height:38px}
.ime{position:absolute;left:1619px;bottom:0}
```
